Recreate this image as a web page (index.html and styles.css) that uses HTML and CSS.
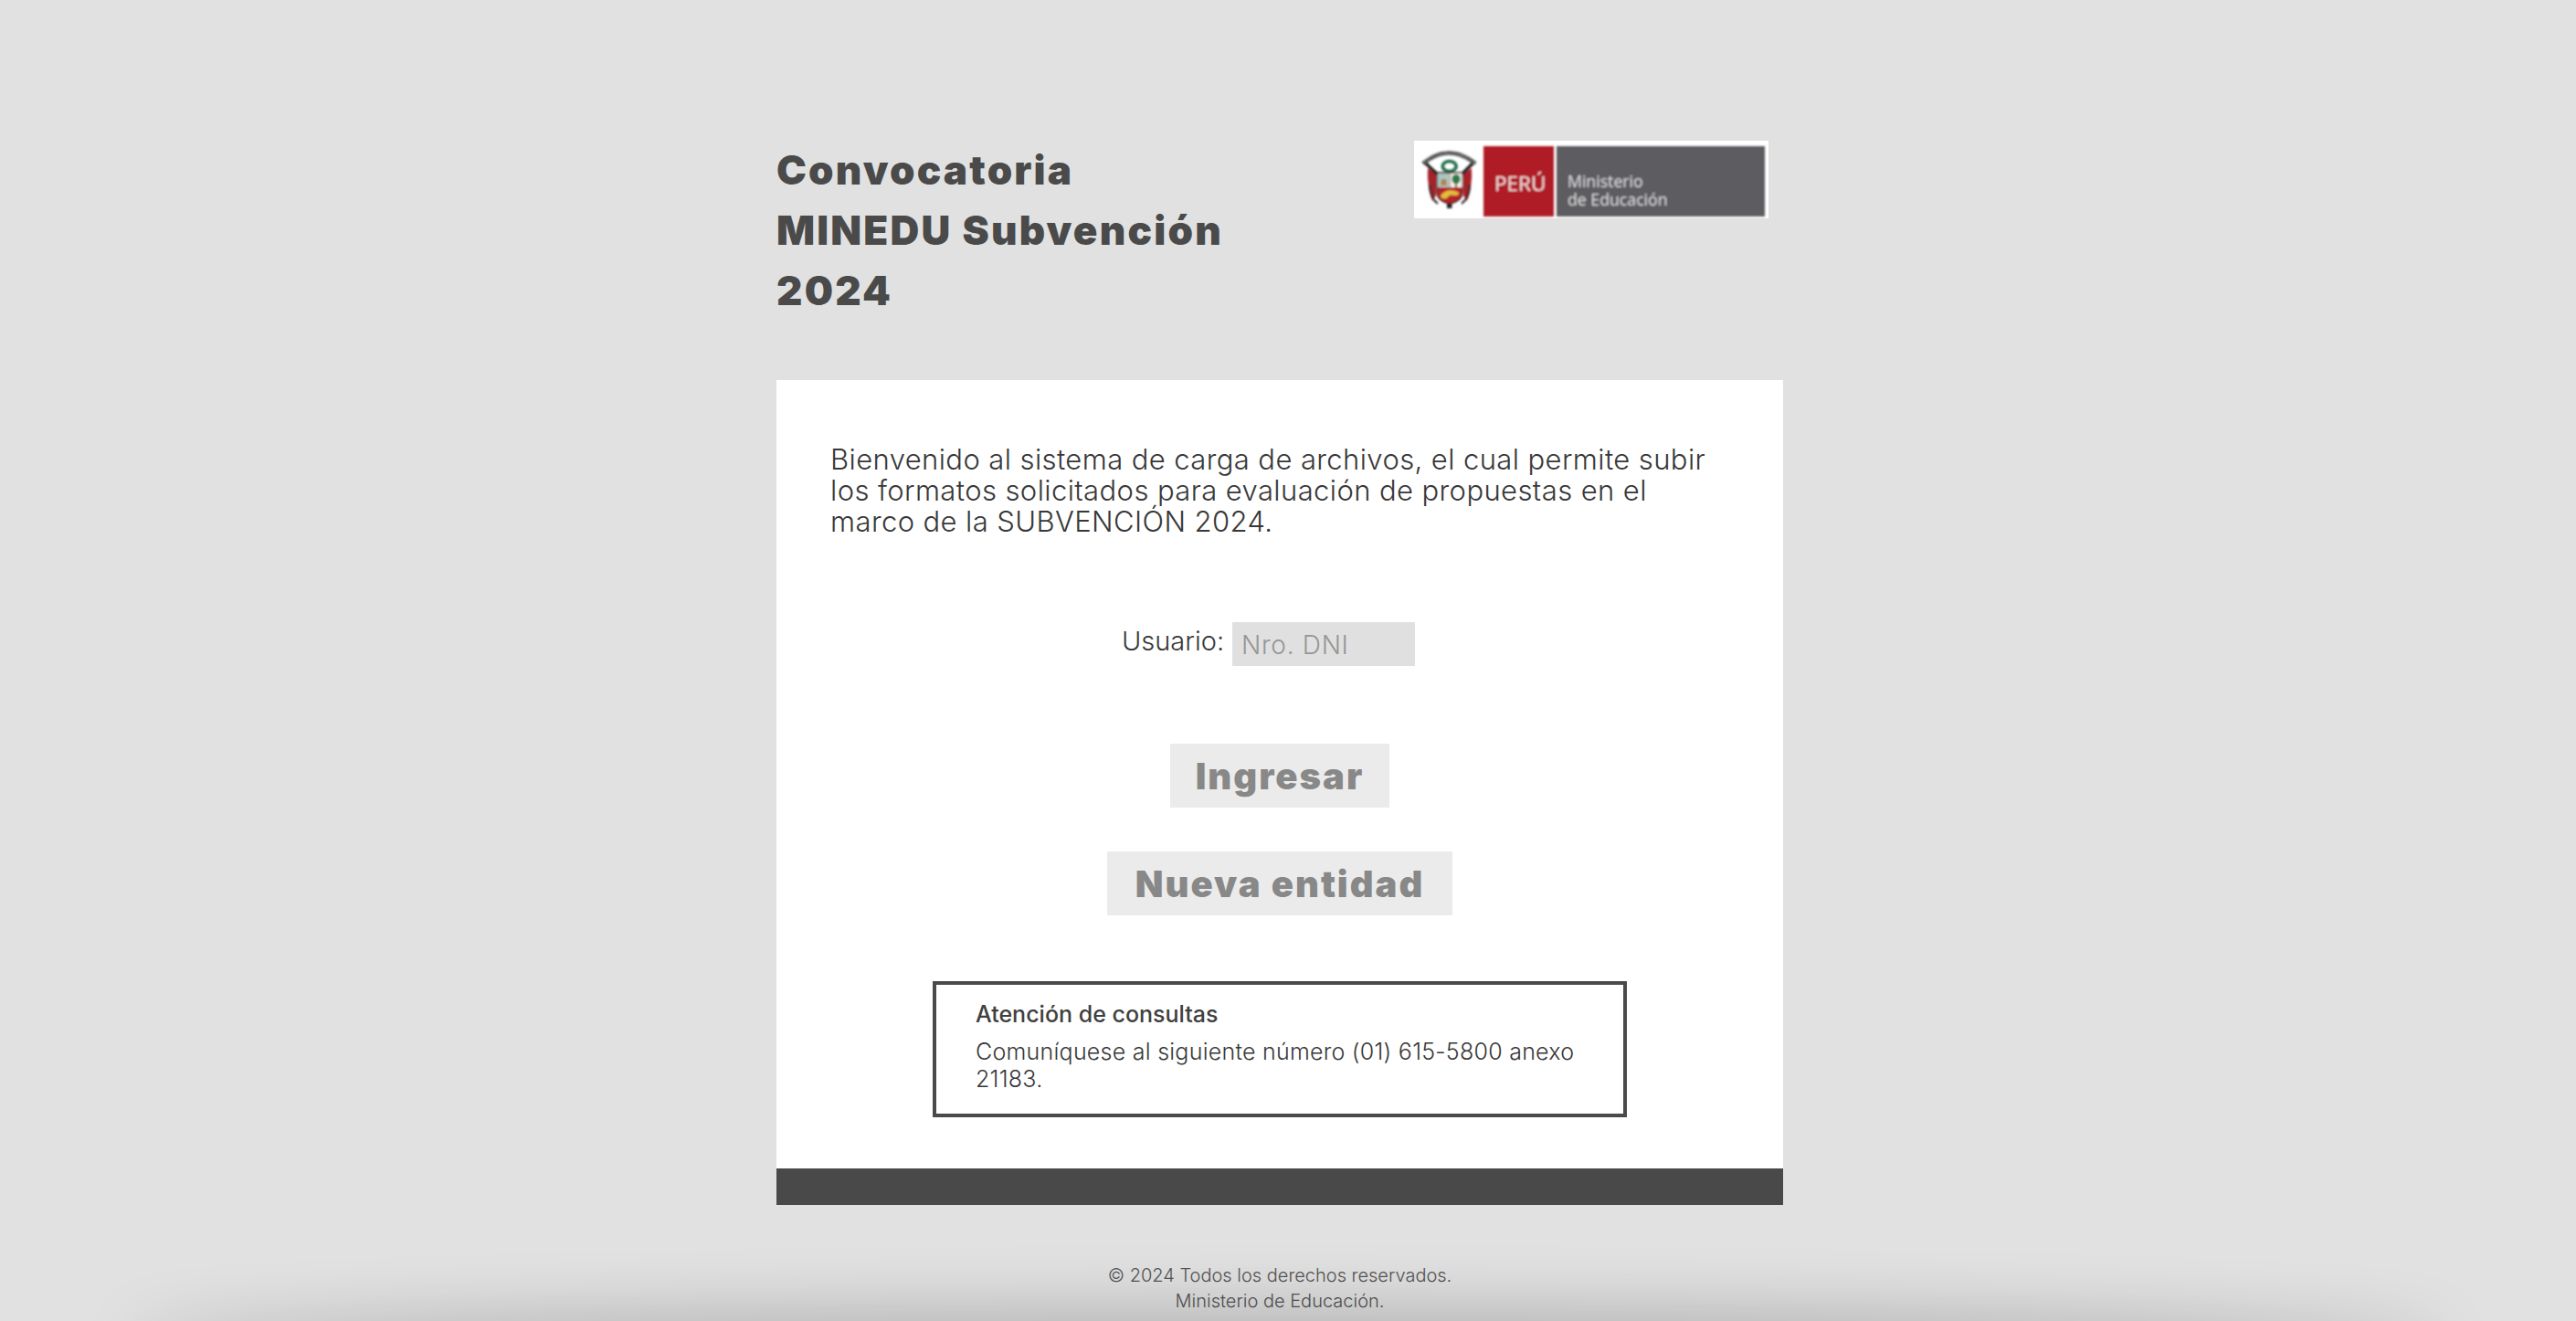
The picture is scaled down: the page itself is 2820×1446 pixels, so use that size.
FILE: index.html
```html
<!DOCTYPE html>
<html lang="es">
<head>
  <meta charset="UTF-8">
  <meta name="viewport" content="width=device-width, initial-scale=1.0">
  <title>Convocatoria MINEDU Subvención 2024</title>
  <link rel="stylesheet" href="styles.css">
</head>
<body>
  <div class="page">
    <header class="header">
      <h1 class="title">Convocatoria<br>MINEDU Subvención<br>2024</h1>
      <svg class="logo" viewBox="0 0 388 85" role="img" aria-label="Perú Ministerio de Educación">
        <defs>
          <filter id="soft" x="-5%" y="-5%" width="110%" height="110%">
            <feGaussianBlur stdDeviation="0.8"/>
          </filter>
        </defs>
        <rect width="388" height="85" fill="#fff"/>
        <g filter="url(#soft)">
          <!-- escudo -->
          <path d="M10 25 Q38 2 67 25" fill="none" stroke="#2b2b2b" stroke-width="4.5" stroke-dasharray="2.4 .8"/>
          <ellipse cx="38.7" cy="28" rx="7.5" ry="5.5" fill="none" stroke="#1f6b45" stroke-width="3.6"/>
          <path d="M15 30 L24 36 L24 60 L20 66 Q14 50 15 30Z" fill="#a5202a"/>
          <path d="M63 30 L54 36 L54 60 L58 66 Q64 50 63 30Z" fill="#a5202a"/>
          <path d="M13 25 L27 38 M64 25 L51 38" stroke="#222" stroke-width="3.4"/>
          <path d="M17 48 Q17 62 26 69 M61 48 Q61 62 52 69" fill="none" stroke="#222" stroke-width="2"/>
          <path d="M25 35 H53 V56 Q53 66 39 69 Q25 66 25 56Z" fill="#b5242a" stroke="#3a2a20" stroke-width="1.4"/>
          <rect x="26" y="36" width="13" height="15" fill="#a9c6c4"/>
          <path d="M29 49 L30 42 L35 42 L36 49Z" fill="#b08448"/>
          <rect x="39.5" y="36" width="13" height="15" fill="#f2f2ea"/>
          <ellipse cx="46" cy="42" rx="4.6" ry="5.2" fill="#2c7c45"/>
          <rect x="45" y="46" width="2" height="5" fill="#6b4a2a"/>
          <path d="M29 60 Q36 51 48 56 Q51 60 45 60 Q38 58 36 63 Q30 65 29 60Z" fill="#e3bd3e"/>
          <rect x="36" y="69" width="5.5" height="5" fill="#222"/>
          <!-- franjas -->
          <rect x="76" y="6" width="77" height="77" fill="#b01f25"/>
          <rect x="156" y="6" width="228" height="77" fill="#5d5c61"/>
          <text class="logo-peru" x="88" y="55">PERÚ</text>
          <text class="logo-min" x="168" y="51">Ministerio</text>
          <text class="logo-min" x="168" y="71">de Educación</text>
        </g>
      </svg>
    </header>

    <main class="panel">
      <div class="panel-body">
        <p class="intro">Bienvenido al sistema de carga de archivos, el cual permite subir los formatos solicitados para evaluación de propuestas en el marco de la SUBVENCIÓN 2024.</p>

        <form class="login">
          <div class="field">
            <label class="field-label" for="usuario">Usuario:</label>
            <input class="field-input" type="text" id="usuario" placeholder="Nro. DNI">
          </div>
          <button class="btn btn-ingresar" type="button">Ingresar</button>
          <button class="btn btn-nueva" type="button">Nueva entidad</button>
        </form>

        <section class="info">
          <h2 class="info-title">Atención de consultas</h2>
          <p class="info-text">Comuníquese al siguiente número (01) 615-5800 anexo 21183.</p>
        </section>
      </div>
      <div class="panel-bar"></div>
    </main>

    <footer class="footer">
      <p>© 2024 Todos los derechos reservados.</p>
      <p>Ministerio de Educación.</p>
    </footer>
  </div>
  <div class="bottom-shade"></div>
</body>
</html>
```

FILE: styles.css
```css
* {
  box-sizing: border-box;
}

html, body {
  height: 100%;
}

body {
  margin: 0;
  background-color: #e1e1e1;
  font-family: Inter, "Liberation Sans", sans-serif;
  color: #4a4a4a;
  overflow: hidden;
}

.page {
  width: 1102px;
  margin-left: 850px;
  padding-top: 153px;
}

.header {
  display: flex;
  justify-content: space-between;
  align-items: flex-start;
  height: 263px;
  padding-right: 16px;
}

.title {
  margin: 0;
  font-size: 44px;
  line-height: 66px;
  font-weight: 900;
  letter-spacing: 2.2px;
  color: #4a4a4a;
}

.logo {
  width: 388px;
  height: 85px;
  margin-top: 1px;
}

.logo-peru {
  font-family: "Open Sans", sans-serif;
  font-size: 22.5px;
  fill: #f3e3e3;
}

.logo-min {
  font-family: "Open Sans", sans-serif;
  font-size: 17.7px;
  fill: #dcdcdc;
}

.panel {
  background-color: #fff;
}

.panel-body {
  padding: 70px 59px 56px;
}

.intro {
  margin: 0;
  font-size: 31px;
  line-height: 34px;
  font-weight: 300;
  letter-spacing: 0.4px;
  color: #383838;
}

.login {
  display: flex;
  flex-direction: column;
  align-items: center;
  margin-top: 93px;
}

.field {
  display: flex;
  gap: 9px;
  margin-right: 25px;
  margin-bottom: 85px;
}

.field-label {
  font-size: 29px;
  line-height: 42px;
  font-weight: 300;
  color: #383838;
}

.field-input {
  width: 200px;
  height: 48px;
  padding: 2px 10px 0;
  border: none;
  border-radius: 0;
  background-color: #e0e0e0;
  font-family: inherit;
  font-size: 28px;
  font-weight: 300;
  letter-spacing: 0.7px;
}

.field-input::placeholder {
  color: #969696;
  opacity: 1;
}

.btn {
  height: 70px;
  padding: 0;
  border: none;
  background-color: #ebebeb;
  color: #888;
  font-family: inherit;
  font-size: 40px;
  font-weight: 900;
  letter-spacing: 2px;
}

.btn-ingresar {
  width: 240px;
  margin-bottom: 48px;
}

.btn-nueva {
  width: 378px;
}

.info {
  width: 760px;
  height: 149px;
  margin: 72px auto 0;
  padding: 17px 43px 0;
  border: 4px solid #4a4a4a;
}

.info-title {
  margin: 0 0 11px;
  font-size: 25px;
  line-height: 30px;
  font-weight: 500;
  color: #404040;
}

.info-text {
  margin: 0;
  font-size: 25px;
  line-height: 30px;
  font-weight: 300;
  letter-spacing: 0.25px;
  color: #383838;
}

.panel-bar {
  height: 40px;
  background-color: #494949;
}

.footer {
  margin-top: 63px;
  text-align: center;
  font-size: 20px;
  line-height: 28px;
  font-weight: 300;
  color: #555;
}

.footer p {
  margin: 0;
}

.bottom-shade {
  position: fixed;
  left: 150px;
  right: 150px;
  bottom: -50px;
  height: 50px;
  border-radius: 50%;
  box-shadow: 0 0 70px 12px rgba(0, 0, 0, 0.22);
  pointer-events: none;
}
```
